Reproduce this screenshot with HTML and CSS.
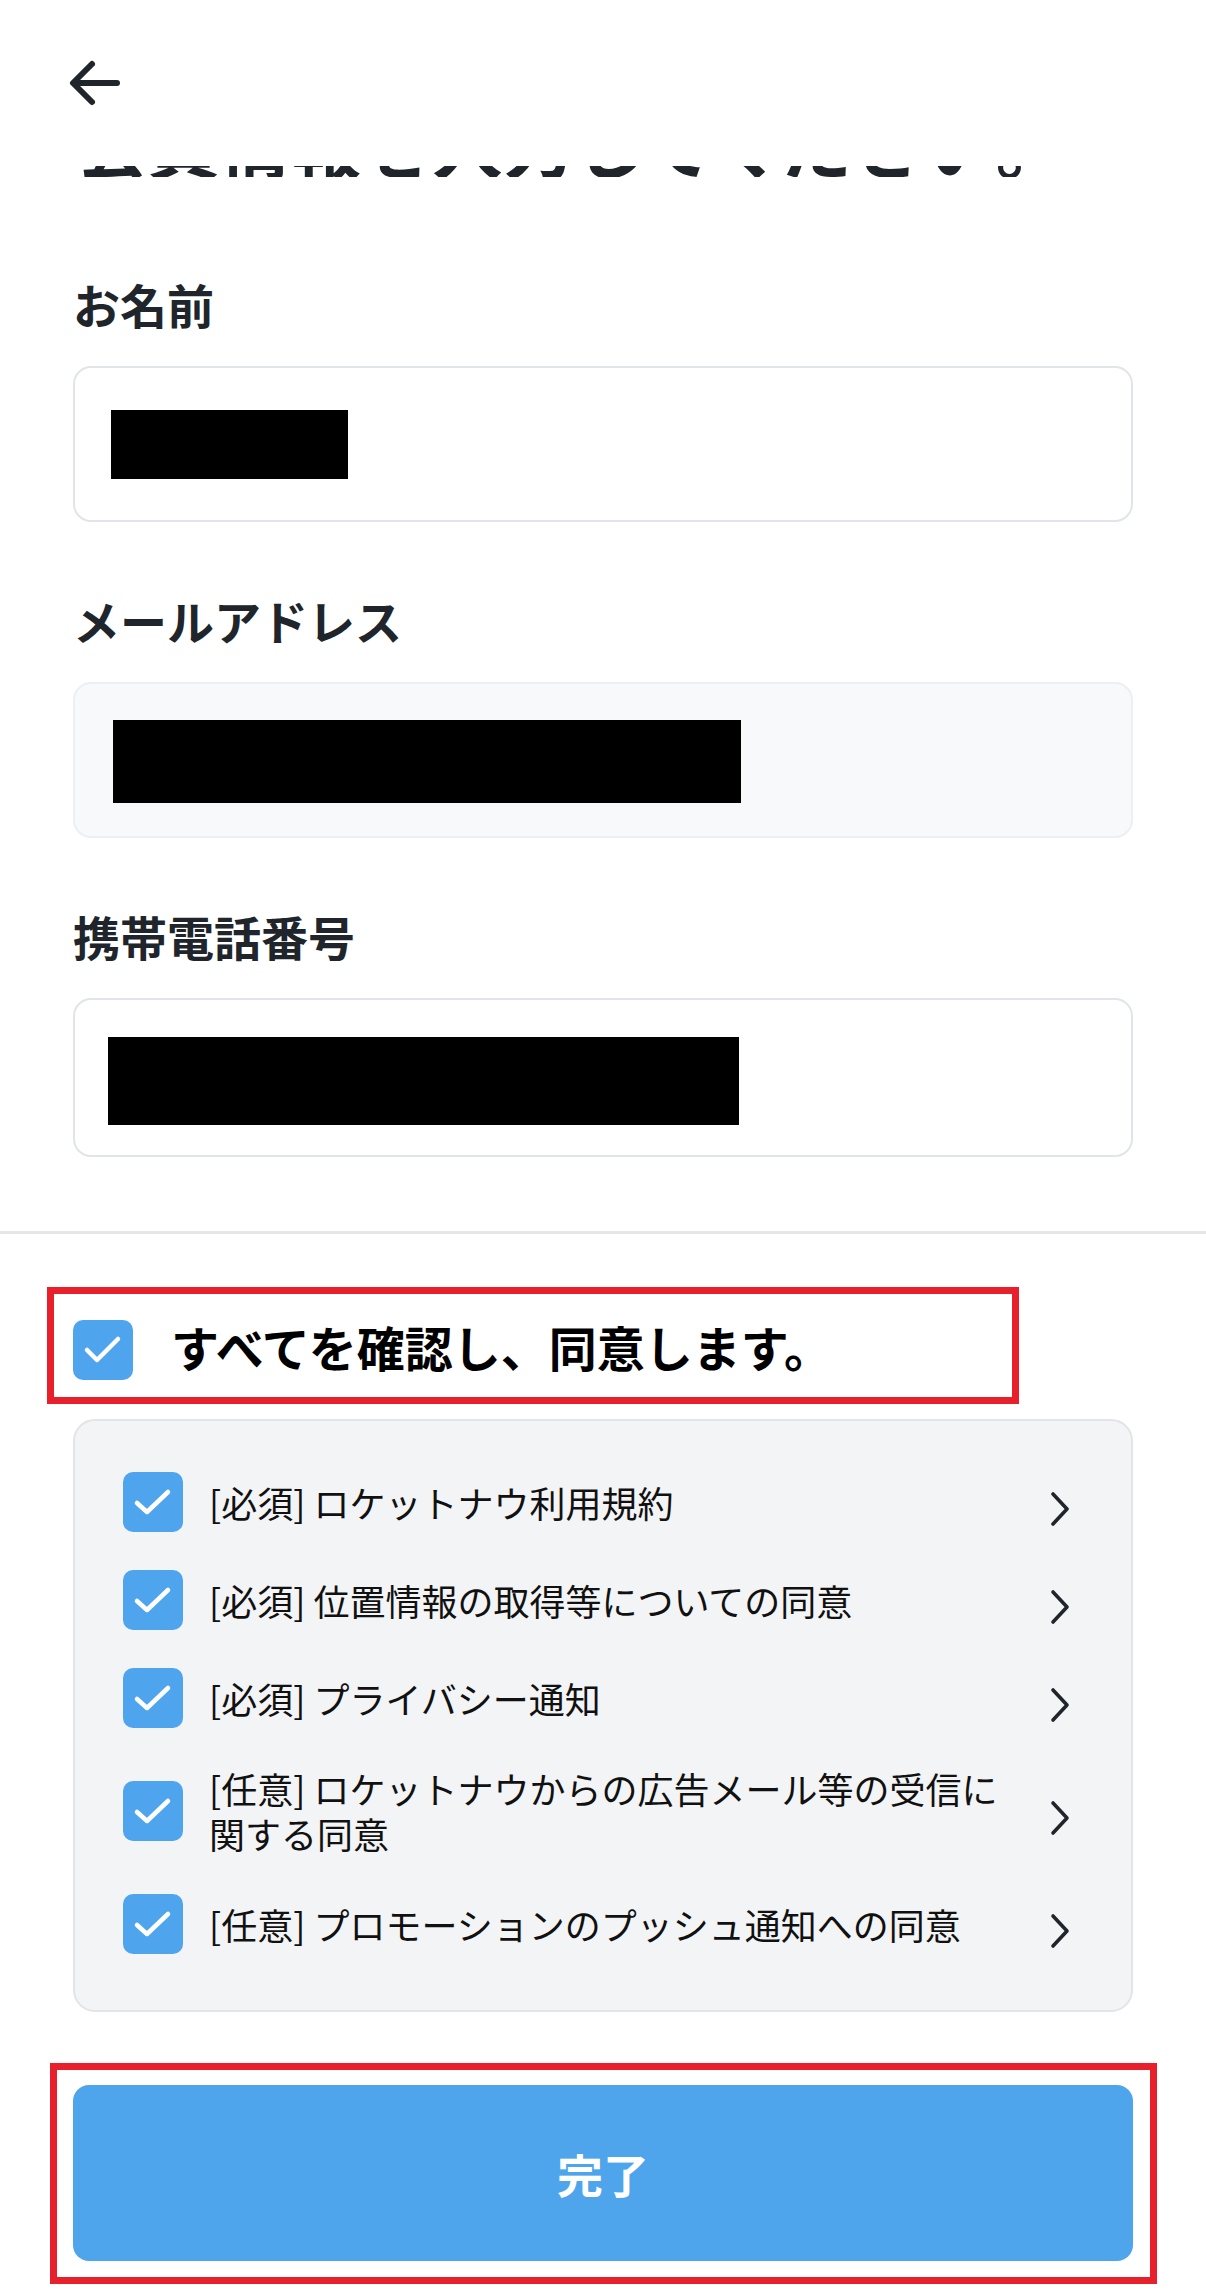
FILE: index.html
```html
<!DOCTYPE html>
<html lang="ja">
<head>
<meta charset="utf-8">
<title>会員情報</title>
<link rel="stylesheet" href="styles.css">
</head>
<body>
<div class="page">
  <header class="topbar">
    <svg class="back" viewBox="0 0 56 56" width="56" height="56" aria-label="戻る">
      <path d="M50 28 H7 M25 9 L6 28 L25 47" fill="none" stroke="#20252c" stroke-width="6" stroke-linecap="round" stroke-linejoin="round"/>
    </svg>
  </header>
  <div class="title-clip"><h1 class="title">会員情報を入力してください。</h1></div>

  <main class="form">
    <section class="field">
      <h2 class="label">お名前</h2>
      <div class="input"><span class="redact redact-name"></span></div>
    </section>
    <section class="field">
      <h2 class="label">メールアドレス</h2>
      <div class="input input-disabled"><span class="redact redact-mail"></span></div>
    </section>
    <section class="field">
      <h2 class="label">携帯電話番号</h2>
      <div class="input input-tel"><span class="redact redact-tel"></span></div>
    </section>
  </main>

  <hr class="divider">

  <section class="consent">
    <div class="consent-all">
      <span class="check">
        <svg viewBox="0 0 60 60" width="60" height="60"><path d="M14 30 L24 40 L45 19" fill="none" stroke="#fff" stroke-width="4.5" stroke-linecap="round" stroke-linejoin="round"/></svg>
      </span>
      <span class="consent-all-text">すべてを確認し、同意します。</span>
      <span class="annot annot-all"></span>
    </div>

    <ul class="terms">
      <li class="term">
        <span class="check"><svg viewBox="0 0 60 60" width="60" height="60"><path d="M14 31 L24 40 L45 20" fill="none" stroke="#fff" stroke-width="4.5" stroke-linecap="round" stroke-linejoin="round"/></svg></span>
        <span class="term-text">[必須] ロケットナウ利用規約</span>
        <svg class="chev" viewBox="0 0 24 36" width="24" height="36"><path d="M5 3 L19 18 L5 33" fill="none" stroke="#20252c" stroke-width="3.6" stroke-linecap="round" stroke-linejoin="round"/></svg>
      </li>
      <li class="term">
        <span class="check"><svg viewBox="0 0 60 60" width="60" height="60"><path d="M14 31 L24 40 L45 20" fill="none" stroke="#fff" stroke-width="4.5" stroke-linecap="round" stroke-linejoin="round"/></svg></span>
        <span class="term-text">[必須] 位置情報の取得等についての同意</span>
        <svg class="chev" viewBox="0 0 24 36" width="24" height="36"><path d="M5 3 L19 18 L5 33" fill="none" stroke="#20252c" stroke-width="3.6" stroke-linecap="round" stroke-linejoin="round"/></svg>
      </li>
      <li class="term">
        <span class="check"><svg viewBox="0 0 60 60" width="60" height="60"><path d="M14 31 L24 40 L45 20" fill="none" stroke="#fff" stroke-width="4.5" stroke-linecap="round" stroke-linejoin="round"/></svg></span>
        <span class="term-text">[必須] プライバシー通知</span>
        <svg class="chev" viewBox="0 0 24 36" width="24" height="36"><path d="M5 3 L19 18 L5 33" fill="none" stroke="#20252c" stroke-width="3.6" stroke-linecap="round" stroke-linejoin="round"/></svg>
      </li>
      <li class="term">
        <span class="check"><svg viewBox="0 0 60 60" width="60" height="60"><path d="M14 31 L24 40 L45 20" fill="none" stroke="#fff" stroke-width="4.5" stroke-linecap="round" stroke-linejoin="round"/></svg></span>
        <span class="term-text">[任意] ロケットナウからの広告メール等の受信に関する同意</span>
        <svg class="chev" viewBox="0 0 24 36" width="24" height="36"><path d="M5 3 L19 18 L5 33" fill="none" stroke="#20252c" stroke-width="3.6" stroke-linecap="round" stroke-linejoin="round"/></svg>
      </li>
      <li class="term">
        <span class="check"><svg viewBox="0 0 60 60" width="60" height="60"><path d="M14 31 L24 40 L45 20" fill="none" stroke="#fff" stroke-width="4.5" stroke-linecap="round" stroke-linejoin="round"/></svg></span>
        <span class="term-text">[任意] プロモーションのプッシュ通知への同意</span>
        <svg class="chev" viewBox="0 0 24 36" width="24" height="36"><path d="M5 3 L19 18 L5 33" fill="none" stroke="#20252c" stroke-width="3.6" stroke-linecap="round" stroke-linejoin="round"/></svg>
      </li>
    </ul>
  </section>

  <div class="submit-wrap">
    <button class="submit" type="button">完了</button>
    <span class="annot annot-btn"></span>
  </div>
</div>
</body>
</html>
```

FILE: styles.css
```css
* { box-sizing: border-box; }

html, body {
  margin: 0;
  padding: 0;
  background: #ffffff;
}

body {
  font-family: "Noto Sans CJK JP", "Noto Sans", sans-serif;
  color: #111;
}

.page {
  width: 1206px;
  height: 2295px;
  overflow: hidden;
  background: #fff;
}

.topbar {
  height: 166px;
  display: flex;
  align-items: center;
  padding-left: 67px;
}

.back { display: block; }

.title-clip {
  height: 11px;
  overflow: hidden;
  padding: 0 73px;
}

.title {
  margin: -59px 0 0 4px;
  font-size: 71px;
  line-height: 70px;
  font-weight: 700;
  color: #20252c;
  white-space: nowrap;
}

.form {
  padding: 95px 73px 0;
  display: flex;
  flex-direction: column;
  gap: 66px;
}

.label {
  margin: 0 0 30px;
  font-size: 47px;
  line-height: 64px;
  font-weight: 700;
  color: #20252c;
}

.input {
  height: 156px;
  border: 2px solid #e1e4e8;
  border-radius: 18px;
  background: #fff;
  display: flex;
  align-items: center;
  padding-left: 36px;
}

.input-tel { height: 159px; }

.input-disabled {
  background: #f8f9fa;
  border-color: #edeff2;
}

.redact {
  display: block;
  background: #000;
}

.redact-name { width: 237px; height: 69px; }
.redact-mail { width: 628px; height: 83px; margin-left: 2px; margin-top: 2px; }
.redact-tel  { width: 631px; height: 88px; margin-left: -3px; margin-top: 6px; }

.divider {
  margin: 74px 0 0;
  border: 0;
  height: 3px;
  background: #e4e6ea;
}

.consent {
  padding: 86px 73px 0;
}

.consent-all {
  position: relative;
  display: flex;
  align-items: center;
  height: 60px;
}

.check {
  flex: 0 0 60px;
  width: 60px;
  height: 60px;
  border-radius: 10px;
  background: #4ea5ee;
  display: block;
}

.check svg { display: block; }

.consent-all-text {
  margin-left: 38px;
  font-size: 48px;
  line-height: 60px;
  font-weight: 700;
  color: #000;
  margin-top: -8px;
}

.annot {
  position: absolute;
  border: 7px solid #e8202b;
  pointer-events: none;
}

.annot-all {
  left: -26px;
  top: -33px;
  width: 972px;
  height: 117px;
}

.terms {
  list-style: none;
  margin: 39px 0 0;
  padding: 51px 59px 56px 48px;
  background: #f3f4f6;
  border: 2px solid #e2e4e8;
  border-radius: 22px;
  display: flex;
  flex-direction: column;
  gap: 38px;
}

.term {
  display: flex;
  align-items: center;
  min-height: 60px;
}

.term-text {
  flex: 1 1 auto;
  margin-left: 26px;
  margin-right: 30px;
  font-size: 36px;
  line-height: 45px;
  color: #111;
}

.chev {
  flex: 0 0 24px;
  display: block;
  margin-top: 14px;
}

.submit-wrap {
  position: relative;
  margin: 73px 73px 0;
}

.submit {
  display: block;
  width: 100%;
  height: 176px;
  border: 0;
  border-radius: 16px;
  background: #4ea5ec;
  color: #fff;
  font-family: "Noto Sans CJK JP", "Noto Sans", sans-serif;
  font-size: 46px;
  font-weight: 700;
  padding: 0;
}

.annot-btn {
  left: -23px;
  top: -22px;
  width: 1107px;
  height: 221px;
}
```
